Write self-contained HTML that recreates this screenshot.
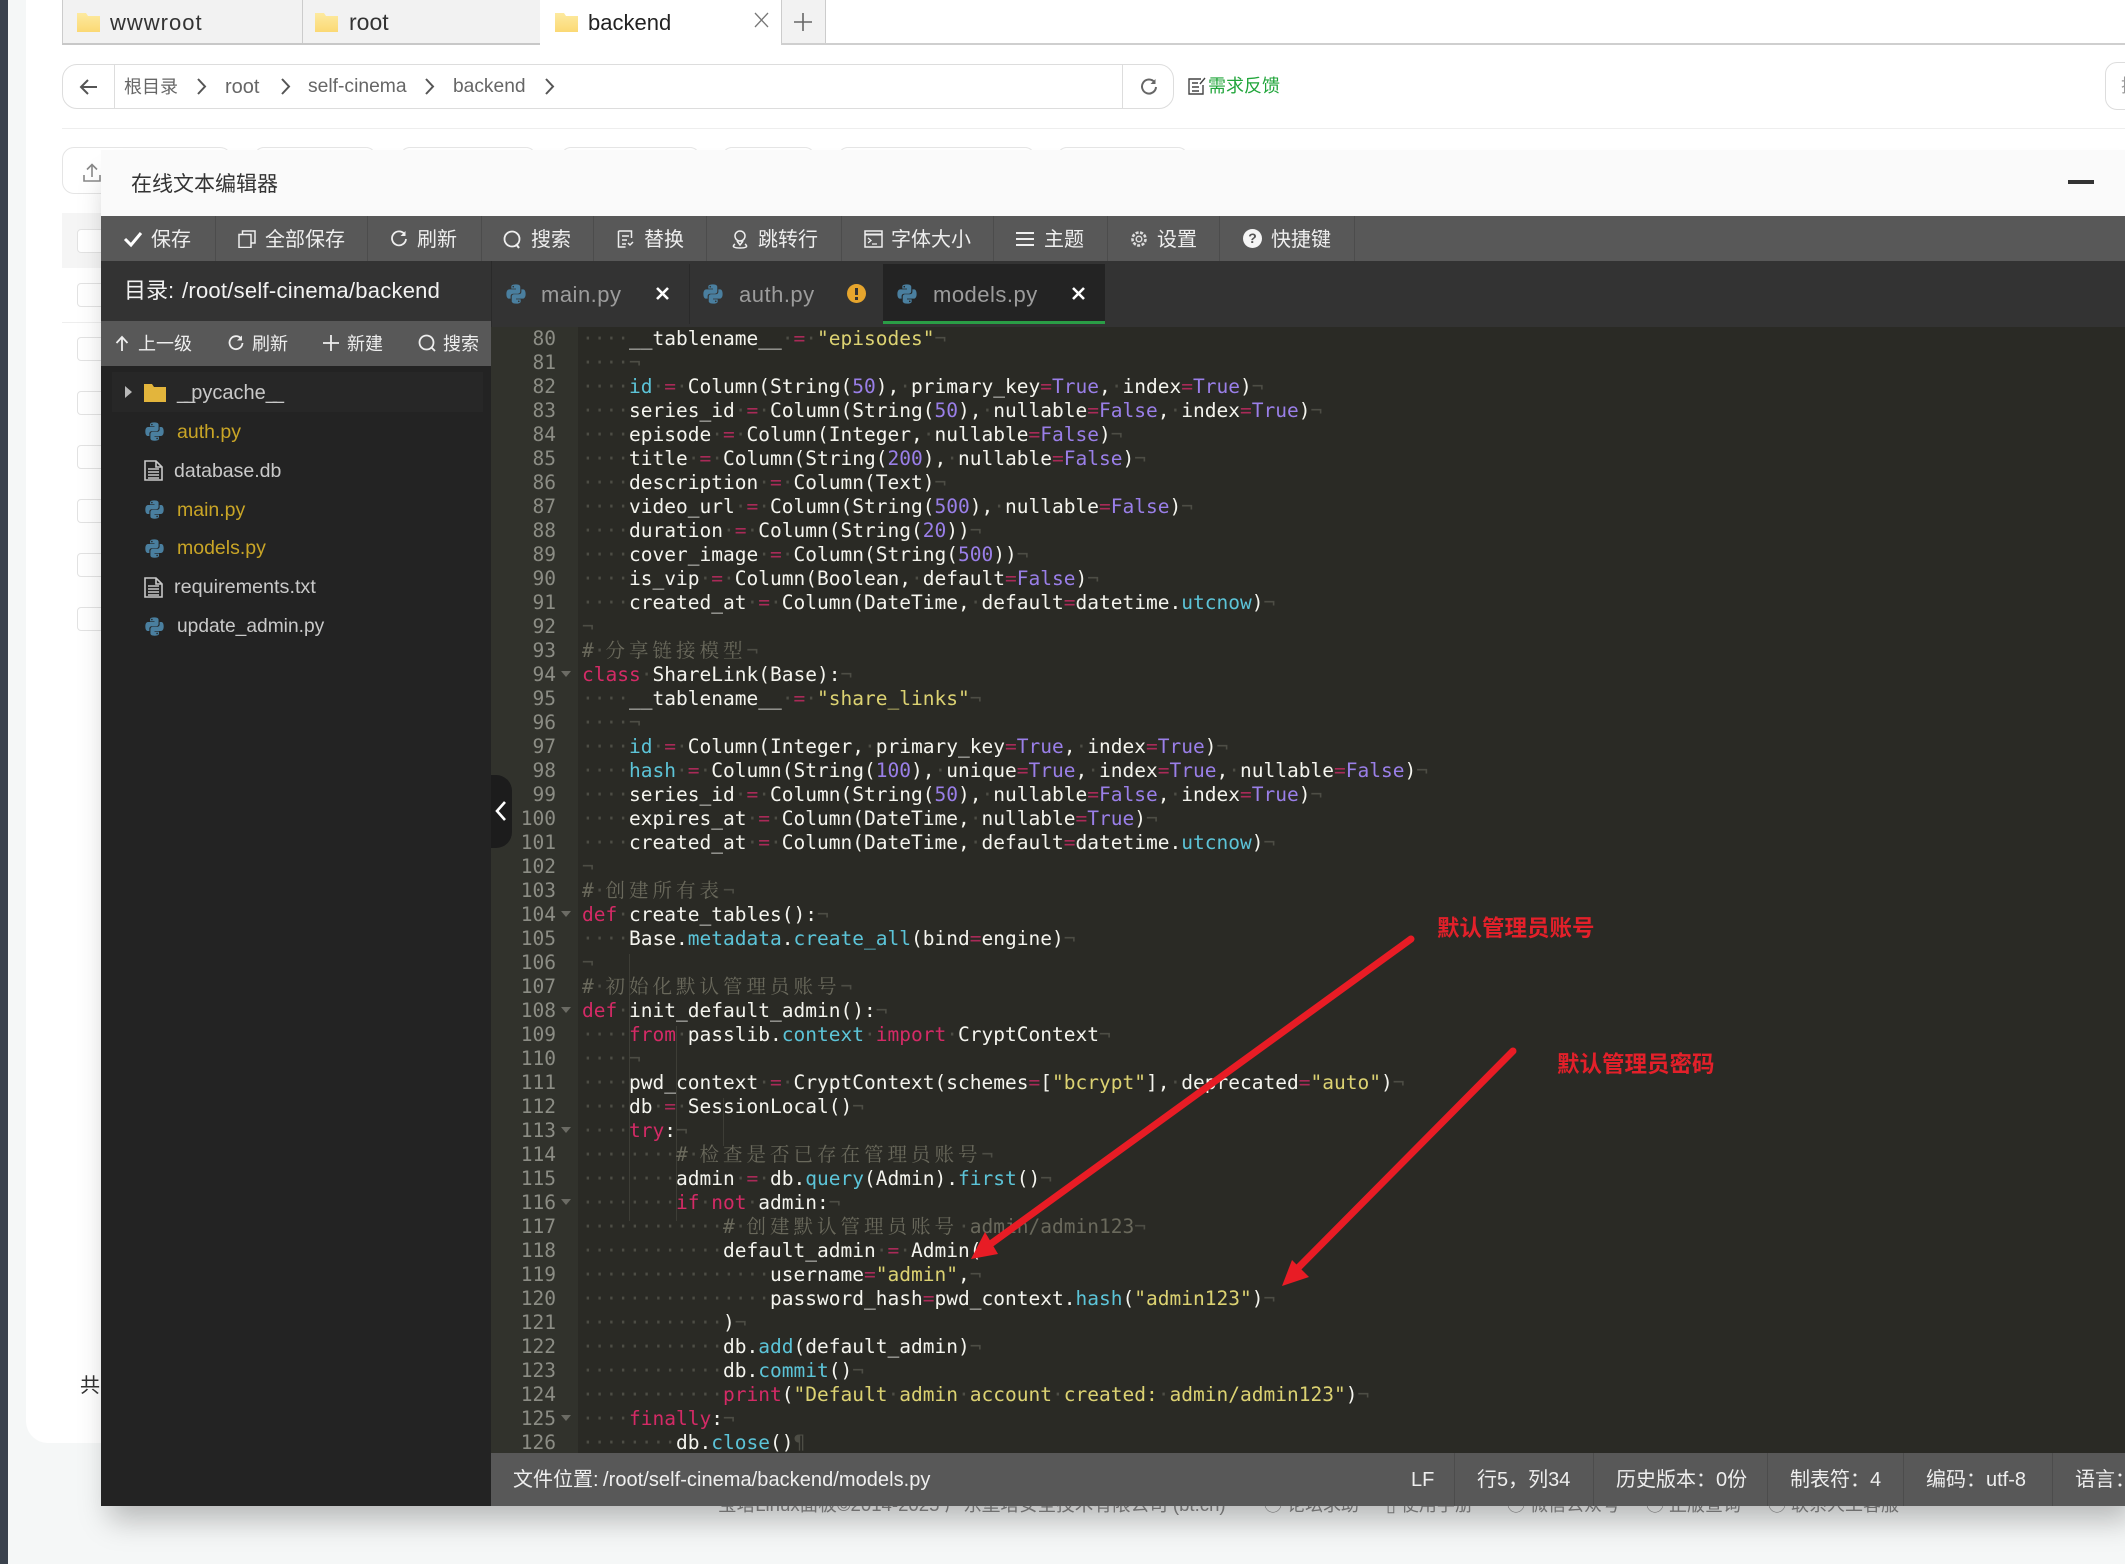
<!DOCTYPE html>
<html lang="zh-CN"><head><meta charset="utf-8"><title>在线文本编辑器</title>
<style>
html,body{margin:0;padding:0;width:2125px;height:1564px;overflow:hidden;background:#f5f7f7}
body{position:relative;font-family:"Liberation Sans","Noto Sans CJK SC",sans-serif;color:#333}
div,span,svg{position:absolute}
.t{position:absolute;line-height:40px;height:40px;white-space:nowrap}
.r{position:absolute;white-space:nowrap;line-height:40px;height:40px;font-size:20px;color:#eee}
pre span{position:static}
pre{margin:0;position:absolute;font-family:"DejaVu Sans Mono","Noto Serif CJK SC",monospace;font-size:19.53px;line-height:24px;white-space:pre}
#code{color:#f4f4ee}
#nums{width:65px;text-align:right;color:#8c8d85}
#code i{font-style:normal;color:#4d4d45}
#code b{font-weight:normal;color:#d42a66}
#code u{text-decoration:none;color:#5cc4d8}
#code s{text-decoration:none;color:#9a7fe8}
#code em{font-style:normal;color:#dcd272}
#code var{font-style:normal;color:#a92a58}
#code cite{font-style:normal;color:#6a695c}
#code dfn{font-style:normal;letter-spacing:3.98px}
.b{background:#fff;border:1px solid #e3e3e3;box-sizing:border-box}
.dv{width:1px;background:#4c4c4c}
.g{width:1px;background:#3d3d36}
.fd{width:0;height:0;border-left:5px solid transparent;border-right:5px solid transparent;border-top:6px solid #6b6b64}
.us{position:static;letter-spacing:-4px}
</style></head><body>
<svg width="0" height="0" style="left:0;top:0">
<defs>
<symbol id="py" viewBox="0 0 16 16"><path fill="#4a7f9f" d="M7.9 1C4.4 1 4.6 2.5 4.6 2.5v1.6H8v.5H3.2S1 4.4 1 8s1.9 3.4 1.9 3.4h1.2V9.7s-.1-1.9 1.9-1.9h3.3s1.8 0 1.8-1.8V2.9S11.4 1 7.9 1zM6 2.1a.6.6 0 110 1.2.6.6 0 010-1.2z"/><path fill="#4a7f9f" d="M8.1 15c3.5 0 3.3-1.5 3.3-1.5v-1.6H8v-.5h4.8S15 11.6 15 8s-1.9-3.4-1.9-3.4h-1.2v1.7s.1 1.9-1.9 1.9H6.7s-1.8 0-1.8 1.8v3.1S4.6 15 8.1 15zm1.9-1.1a.6.6 0 110-1.2.6.6 0 010 1.2z"/></symbol>
<symbol id="doc" viewBox="0 0 19 21"><path fill="none" stroke="#c8c8c8" stroke-width="1.6" d="M1 1h11l6 6v13H1zM12 1v6h6M4 9h11M4 12h11M4 15h11M4 18h11"/></symbol>
<symbol id="fo" viewBox="0 0 23 20"><linearGradient id="lg" x1="0" x2="0" y1="0" y2="1"><stop offset="0" stop-color="#fdeaa0"/><stop offset="1" stop-color="#fbd974"/></linearGradient><path fill="url(#lg)" d="M0 1h9l2 3h12v16H0z"/></symbol>
</defs></svg>

<!-- page chrome -->
<div style="left:0;top:0;width:8px;height:1564px;background:#3a424d"></div>
<div style="left:26px;top:0;width:2099px;height:1443px;background:#fff;border-bottom-left-radius:22px"></div>

<!-- tabs -->
<div style="left:62px;top:0;width:240px;height:43px;background:#f2f2f2;border-left:1px solid #ccc;box-sizing:border-box"></div>
<div style="left:302px;top:0;width:238px;height:43px;background:#f2f2f2;border-left:1px solid #ccc;box-sizing:border-box"></div>
<div style="left:781px;top:0;width:45px;height:43px;background:#f2f2f2;border-left:1px solid #ccc;border-right:1px solid #ccc;box-sizing:border-box"></div>
<div style="left:62px;top:43px;width:478px;height:1.5px;background:#c8c8c8"></div>
<div style="left:781px;top:43px;width:1344px;height:1.5px;background:#cfcfcf"></div>
<svg style="left:77px;top:12px" width="23" height="20"><use href="#fo"/></svg>
<svg style="left:315px;top:12px" width="23" height="20"><use href="#fo"/></svg>
<svg style="left:555px;top:12px" width="23" height="20"><use href="#fo"/></svg>
<span class="t" style="left:110px;top:3px;font-size:22px;letter-spacing:1px;color:#333">wwwroot</span>
<span class="t" style="left:349px;top:2px;font-size:23px;color:#333">root</span>
<span class="t" style="left:588px;top:3px;font-size:22px;color:#222">backend</span>
<svg style="left:754px;top:12px" width="15" height="16"><path d="M1 1l13 14M14 1L1 15" stroke="#777" stroke-width="1.3" fill="none"/></svg>
<svg style="left:793px;top:12px" width="20" height="20"><path d="M10 1v18M1 10h18" stroke="#666" stroke-width="1.6" fill="none"/></svg>

<!-- breadcrumb -->
<div style="left:62px;top:64px;width:1112px;height:45px;border:1.5px solid #ddd;border-radius:15px;box-sizing:border-box;background:#fff"></div>
<div style="left:114px;top:65px;width:1px;height:43px;background:#ddd"></div>
<div style="left:1122px;top:65px;width:1px;height:43px;background:#ddd"></div>
<svg style="left:79px;top:78px" width="20" height="18"><path d="M18 9H3M9 2L2 9l7 7" stroke="#555" stroke-width="2" fill="none"/></svg>
<span class="t" style="left:124px;top:67px;font-size:18px;color:#666">根目录</span>
<span class="t" style="left:225px;top:67px;font-size:20px;color:#666">root</span>
<span class="t" style="left:308px;top:67px;font-size:19.3px;color:#666">self-cinema</span>
<span class="t" style="left:453px;top:67px;font-size:19.2px;color:#666">backend</span>
<svg style="left:196px;top:77px" width="11" height="19"><path d="M2 2l7 7.500L2 17" stroke="#555" stroke-width="2" fill="none"/></svg>
<svg style="left:280px;top:77px" width="11" height="19"><path d="M2 2l7 7.500L2 17" stroke="#555" stroke-width="2" fill="none"/></svg>
<svg style="left:424px;top:77px" width="11" height="19"><path d="M2 2l7 7.500L2 17" stroke="#555" stroke-width="2" fill="none"/></svg>
<svg style="left:544px;top:77px" width="11" height="19"><path d="M2 2l7 7.500L2 17" stroke="#555" stroke-width="2" fill="none"/></svg>
<svg style="left:1140px;top:78px" width="18" height="18"><path d="M14.500 4.200A7 7 0 1 0 16 9" stroke="#666" stroke-width="2" fill="none"/><path d="M15.500 1v5h-5" fill="#666"/></svg>
<svg style="left:1188px;top:77px" width="19" height="18"><path d="M13 2H1v15h14V8M4 6h6M4 10h7M4 14h7M17 1l-5 6" stroke="#444" stroke-width="1.400" fill="none"/></svg>
<span class="t" style="left:1208px;top:66px;font-size:18px;color:#20a53a">需求反馈</span>
<div style="left:2105px;top:62px;width:40px;height:48px;border:1.500px solid #ddd;border-radius:12px;box-sizing:border-box"></div>
<span class="t" style="left:2121px;top:66px;font-size:18px;color:#999">搜</span>
<div style="left:62px;top:128px;width:2063px;height:1px;background:#eee"></div>

<!-- action buttons peeking -->
<div style="left:62px;top:147px;width:170px;height:47px;border:1.500px solid #e5e5e5;border-radius:12px;box-sizing:border-box"></div>
<div style="left:254px;top:147px;width:122px;height:20px;border:1.500px solid #e5e5e5;border-radius:12px;box-sizing:border-box"></div>
<div style="left:400px;top:147px;width:136px;height:20px;border:1.500px solid #e5e5e5;border-radius:12px;box-sizing:border-box"></div>
<div style="left:561px;top:147px;width:139px;height:20px;border:1.500px solid #e5e5e5;border-radius:12px;box-sizing:border-box"></div>
<div style="left:722px;top:147px;width:93px;height:20px;border:1.500px solid #e5e5e5;border-radius:12px;box-sizing:border-box"></div>
<div style="left:838px;top:147px;width:197px;height:20px;border:1.500px solid #e5e5e5;border-radius:12px;box-sizing:border-box"></div>
<div style="left:1057px;top:147px;width:131px;height:20px;border:1.500px solid #e5e5e5;border-radius:12px;box-sizing:border-box"></div>
<svg style="left:82px;top:163px" width="20" height="20"><path d="M10 14V2M5 6.500L10 1.500l5 5M2 12v6h16v-6" stroke="#888" stroke-width="1.600" fill="none"/></svg>

<!-- table rows peeking -->
<div style="left:62px;top:213px;width:40px;height:55px;background:#f5f5f5"></div>
<div style="left:62px;top:322px;width:40px;height:1px;background:#eee"></div>
<div class="b" style="left:77px;top:229px;width:30px;height:24px;border-radius:4px"></div>
<div class="b" style="left:77px;top:283px;width:30px;height:24px;border-radius:4px"></div>
<div class="b" style="left:77px;top:337px;width:30px;height:24px;border-radius:4px"></div>
<div class="b" style="left:77px;top:391px;width:30px;height:24px;border-radius:4px"></div>
<div class="b" style="left:77px;top:445px;width:30px;height:24px;border-radius:4px"></div>
<div class="b" style="left:77px;top:499px;width:30px;height:24px;border-radius:4px"></div>
<div class="b" style="left:77px;top:553px;width:30px;height:24px;border-radius:4px"></div>
<div class="b" style="left:77px;top:607px;width:30px;height:24px;border-radius:4px"></div>
<span class="t" style="left:80px;top:1366px;font-size:20px;color:#333">共</span>

<!-- footer peeking -->
<span class="t" style="left:718px;top:1485px;font-size:18.6px;color:#888">宝塔Linux面板©2014-2025 广东堡塔安全技术有限公司 (bt.cn)</span>
<span class="t" style="left:1264px;top:1485px;font-size:18px;color:#888">◯ 论坛求助</span>
<span class="t" style="left:1386px;top:1485px;font-size:18px;color:#888">▯ 使用手册</span>
<span class="t" style="left:1507px;top:1485px;font-size:18px;color:#888">◯ 微信公众号</span>
<span class="t" style="left:1646px;top:1485px;font-size:18px;color:#888">◯ 正版查询</span>
<span class="t" style="left:1768px;top:1485px;font-size:18px;color:#888">◯ 联系人工客服</span>

<!-- modal -->
<div style="left:101px;top:150px;width:2040px;height:1356px;background:#fafafa;box-shadow:0 22px 28px -8px rgba(0,0,0,.26)"></div>
<span class="t" style="left:131px;top:165px;font-size:21px;color:#333">在线文本编辑器</span>
<div style="left:2068px;top:180px;width:26px;height:4px;background:#333"></div>

<!-- toolbar -->
<div style="left:101px;top:216px;width:2024px;height:45px;background:#585858"></div>
<div class="dv" style="left:215px;top:216px;height:45px"></div>
<div class="dv" style="left:367px;top:216px;height:45px"></div>
<div class="dv" style="left:481px;top:216px;height:45px"></div>
<div class="dv" style="left:593px;top:216px;height:45px"></div>
<div class="dv" style="left:706px;top:216px;height:45px"></div>
<div class="dv" style="left:841px;top:216px;height:45px"></div>
<div class="dv" style="left:993px;top:216px;height:45px"></div>
<div class="dv" style="left:1107px;top:216px;height:45px"></div>
<div class="dv" style="left:1219px;top:216px;height:45px"></div>
<div class="dv" style="left:1354px;top:216px;height:45px"></div>
<svg style="left:123px;top:230px" width="20" height="18"><path d="M2 9l6 6L18 3" stroke="#fff" stroke-width="3" fill="none"/></svg>
<span class="r" style="left:151px;top:220px">保存</span>
<svg style="left:238px;top:230px" width="18" height="18"><path d="M1 4.500h12v13H1zM4.500 4.500V1H17v12h-4" stroke="#eee" stroke-width="1.500" fill="none"/></svg>
<span class="r" style="left:265px;top:220px">全部保存</span>
<svg style="left:390px;top:230px" width="18" height="18"><path d="M14.500 4A7 7 0 1 0 16 9" stroke="#eee" stroke-width="1.800" fill="none"/><path d="M15.500 1v5h-5" fill="#eee"/></svg>
<span class="r" style="left:417px;top:220px">刷新</span>
<svg style="left:503px;top:230px" width="19" height="19"><circle cx="9" cy="9" r="7.500" stroke="#eee" stroke-width="1.800" fill="none"/><path d="M13 14l3 4" stroke="#eee" stroke-width="2"/></svg>
<span class="r" style="left:531px;top:220px">搜索</span>
<svg style="left:617px;top:230px" width="17" height="18"><path d="M1.500 1h13v7M1.500 1v16h7M5 6h7M5 10h5M5 14h4M11 13l2 2 3-3" stroke="#eee" stroke-width="1.500" fill="none"/></svg>
<span class="r" style="left:644px;top:220px">替换</span>
<svg style="left:731px;top:229px" width="18" height="20"><circle cx="9" cy="7" r="5" stroke="#eee" stroke-width="1.500" fill="none"/><path d="M6 12l3 4 3-4M4 15c-4 3 0 4 5 4s9-1 5-4" stroke="#eee" stroke-width="1.500" fill="none"/></svg>
<span class="r" style="left:758px;top:220px">跳转行</span>
<svg style="left:864px;top:230px" width="19" height="18"><rect x="1" y="1" width="17" height="16" stroke="#eee" stroke-width="1.500" fill="none"/><path d="M1 4.500h17" stroke="#eee" stroke-width="2"/><path d="M4 8l3 2.500L4 13M8 14h5" stroke="#eee" stroke-width="1.300" fill="none"/></svg>
<span class="r" style="left:891px;top:220px">字体大小</span>
<svg style="left:1016px;top:231px" width="18" height="16"><path d="M0 2h18M0 8h18M0 14h18" stroke="#eee" stroke-width="2"/></svg>
<span class="r" style="left:1044px;top:220px">主题</span>
<svg style="left:1130px;top:230px" width="18" height="18" viewBox="0 0 18 18"><circle cx="9" cy="9" r="6.500" stroke="#ddd" stroke-width="2.600" fill="none" stroke-dasharray="3 1.500"/><circle cx="9" cy="9" r="2.800" stroke="#ddd" stroke-width="1.500" fill="none"/></svg>
<span class="r" style="left:1157px;top:220px">设置</span>
<div style="left:1243px;top:229px;width:19px;height:19px;border-radius:50%;background:#f5f5f5;color:#555;font-size:14px;font-weight:bold;line-height:19px;text-align:center">?</div>
<span class="r" style="left:1271px;top:220px">快捷键</span>

<!-- tab row -->
<div style="left:101px;top:261px;width:2024px;height:66px;background:#333"></div>
<div style="left:491px;top:261px;width:1px;height:66px;background:#2a2a2a"></div>
<div style="left:689px;top:264px;width:1px;height:60px;background:#2a2a2a"></div>
<div style="left:883px;top:264px;width:222px;height:60px;background:#232323"></div>
<div style="left:883px;top:321px;width:222px;height:3px;background:#2a9d46"></div>
<span class="t" style="left:124px;top:271px;font-size:22px;color:#f2f2f2">目录:</span>
<span class="t" style="left:182px;top:271px;font-size:22px;letter-spacing:.25px;color:#f2f2f2">/root/self-cinema/backend</span>
<svg style="left:505px;top:283px" width="22" height="22"><use href="#py"/></svg>
<span class="t" style="left:541px;top:275px;font-size:22px;color:#9c9c9c;letter-spacing:.5px">main.py</span>
<svg style="left:655px;top:286px" width="15" height="15"><path d="M2 2l11 11M13 2L2 13" stroke="#fff" stroke-width="2.600"/></svg>
<svg style="left:702px;top:283px" width="22" height="22"><use href="#py"/></svg>
<span class="t" style="left:739px;top:275px;font-size:22px;color:#9c9c9c;letter-spacing:.5px">auth.py</span>
<div style="left:847px;top:284px;width:19px;height:19px;border-radius:50%;background:#e6a52d"></div>
<div style="left:855px;top:288px;width:3px;height:7px;background:#333"></div>
<div style="left:855px;top:297px;width:3px;height:3px;background:#333"></div>
<svg style="left:896px;top:283px" width="22" height="22"><use href="#py"/></svg>
<span class="t" style="left:933px;top:275px;font-size:22px;color:#9c9c9c;letter-spacing:.5px">models.py</span>
<svg style="left:1071px;top:286px" width="15" height="15"><path d="M2 2l11 11M13 2L2 13" stroke="#fff" stroke-width="2.600"/></svg>

<!-- sidebar -->
<div style="left:101px;top:321px;width:390px;height:45px;background:#585858"></div>
<div style="left:101px;top:366px;width:390px;height:1140px;background:#232323"></div>
<svg style="left:115px;top:335px" width="14" height="17"><path d="M7 16V2M1.500 8L7 2l5.500 6" stroke="#eee" stroke-width="1.800" fill="none"/></svg>
<span class="t" style="left:138px;top:324px;font-size:18px;color:#eee">上一级</span>
<svg style="left:228px;top:335px" width="16" height="16"><path d="M13 3.500A6.500 6.500 0 1 0 14.500 8" stroke="#eee" stroke-width="1.800" fill="none"/><path d="M14 .5v5H9" fill="#eee"/></svg>
<span class="t" style="left:252px;top:324px;font-size:18px;color:#eee">刷新</span>
<svg style="left:323px;top:335px" width="16" height="16"><path d="M8 0v16M0 8h16" stroke="#eee" stroke-width="1.800"/></svg>
<span class="t" style="left:347px;top:324px;font-size:18px;color:#eee">新建</span>
<svg style="left:418px;top:334px" width="18" height="18"><circle cx="8.500" cy="8.500" r="7" stroke="#eee" stroke-width="1.800" fill="none"/><path d="M13 13l4 4" stroke="#eee" stroke-width="1.800"/></svg>
<span class="t" style="left:443px;top:324px;font-size:18px;color:#eee">搜索</span>

<div style="left:112px;top:372px;width:371px;height:40px;background:#272727"></div>
<div style="left:125px;top:386px;width:0;height:0;border-top:6px solid transparent;border-bottom:6px solid transparent;border-left:7px solid #b9b9b9"></div>
<svg style="left:144px;top:384px" width="22" height="18"><path fill="#e3b53c" d="M0 0h8l2 3h12v15H0z"/></svg>
<svg style="left:144px;top:421px" width="21" height="21"><use href="#py"/></svg>
<svg style="left:144px;top:460px" width="19" height="21"><use href="#doc"/></svg>
<svg style="left:144px;top:499px" width="21" height="21"><use href="#py"/></svg>
<svg style="left:144px;top:538px" width="21" height="21"><use href="#py"/></svg>
<svg style="left:144px;top:577px" width="19" height="21"><use href="#doc"/></svg>
<svg style="left:144px;top:616px" width="21" height="21"><use href="#py"/></svg>
<span class="t" style="left:177px;top:373px;font-size:20px;color:#c9c9c9"><span class="us">__</span>pycache<span class="us">__</span></span>
<span class="t" style="left:177px;top:412px;font-size:19.5px;color:#c9a526">auth.py</span>
<span class="t" style="left:174px;top:451px;font-size:19.5px;color:#c9c9c9">database.db</span>
<span class="t" style="left:177px;top:490px;font-size:19.5px;color:#c9a526">main.py</span>
<span class="t" style="left:177px;top:528px;font-size:19.5px;color:#c9a526">models.py</span>
<span class="t" style="left:174px;top:567px;font-size:19.8px;color:#c9c9c9">requirements.txt</span>
<span class="t" style="left:177px;top:607px;font-size:19.2px;color:#c9c9c9">update_admin.py</span>

<!-- editor -->
<div style="left:491px;top:327px;width:1634px;height:1126px;background:#2a2a25"></div>
<div style="left:491px;top:327px;width:87px;height:1126px;background:#31322c"></div>
<div style="left:491px;top:327px;width:1634px;height:1126px;overflow:hidden">
<div class="g" style="left:138px;top:627px;height:267px"></div>
<div class="g" style="left:185px;top:699px;height:195px"></div>
<div class="g" style="left:232px;top:771px;height:48px"></div>
<div class="fd" style="left:70px;top:344px"></div>
<div class="fd" style="left:70px;top:584px"></div>
<div class="fd" style="left:70px;top:680px"></div>
<div class="fd" style="left:70px;top:800px"></div>
<div class="fd" style="left:70px;top:872px"></div>
<div class="fd" style="left:70px;top:1088px"></div>
</div>
<div style="left:491px;top:327px;width:1634px;height:1126px;overflow:hidden"><pre id="nums" style="left:0;top:0">80
81
82
83
84
85
86
87
88
89
90
91
92
93
94
95
96
97
98
99
100
101
102
103
104
105
106
107
108
109
110
111
112
113
114
115
116
117
118
119
120
121
122
123
124
125
126</pre><pre id="code" style="left:91px;top:0"><i>····</i>__tablename__<i>·</i><var>=</var><i>·</i><em>"episodes"</em><i>¬</i>
<i>····¬</i>
<i>····</i><u>id</u><i>·</i><var>=</var><i>·</i>Column(String(<s>50</s>),<i>·</i>primary_key<var>=</var><s>True</s>,<i>·</i>index<var>=</var><s>True</s>)<i>¬</i>
<i>····</i>series_id<i>·</i><var>=</var><i>·</i>Column(String(<s>50</s>),<i>·</i>nullable<var>=</var><s>False</s>,<i>·</i>index<var>=</var><s>True</s>)<i>¬</i>
<i>····</i>episode<i>·</i><var>=</var><i>·</i>Column(Integer,<i>·</i>nullable<var>=</var><s>False</s>)<i>¬</i>
<i>····</i>title<i>·</i><var>=</var><i>·</i>Column(String(<s>200</s>),<i>·</i>nullable<var>=</var><s>False</s>)<i>¬</i>
<i>····</i>description<i>·</i><var>=</var><i>·</i>Column(Text)<i>¬</i>
<i>····</i>video_url<i>·</i><var>=</var><i>·</i>Column(String(<s>500</s>),<i>·</i>nullable<var>=</var><s>False</s>)<i>¬</i>
<i>····</i>duration<i>·</i><var>=</var><i>·</i>Column(String(<s>20</s>))<i>¬</i>
<i>····</i>cover_image<i>·</i><var>=</var><i>·</i>Column(String(<s>500</s>))<i>¬</i>
<i>····</i>is_vip<i>·</i><var>=</var><i>·</i>Column(Boolean,<i>·</i>default<var>=</var><s>False</s>)<i>¬</i>
<i>····</i>created_at<i>·</i><var>=</var><i>·</i>Column(DateTime,<i>·</i>default<var>=</var>datetime.<u>utcnow</u>)<i>¬</i>
<i>¬</i>
<cite>#<i>·</i><dfn>分享链接模型</dfn></cite><i>¬</i>
<b>class</b><i>·</i>ShareLink(Base):<i>¬</i>
<i>····</i>__tablename__<i>·</i><var>=</var><i>·</i><em>"share_links"</em><i>¬</i>
<i>····¬</i>
<i>····</i><u>id</u><i>·</i><var>=</var><i>·</i>Column(Integer,<i>·</i>primary_key<var>=</var><s>True</s>,<i>·</i>index<var>=</var><s>True</s>)<i>¬</i>
<i>····</i><u>hash</u><i>·</i><var>=</var><i>·</i>Column(String(<s>100</s>),<i>·</i>unique<var>=</var><s>True</s>,<i>·</i>index<var>=</var><s>True</s>,<i>·</i>nullable<var>=</var><s>False</s>)<i>¬</i>
<i>····</i>series_id<i>·</i><var>=</var><i>·</i>Column(String(<s>50</s>),<i>·</i>nullable<var>=</var><s>False</s>,<i>·</i>index<var>=</var><s>True</s>)<i>¬</i>
<i>····</i>expires_at<i>·</i><var>=</var><i>·</i>Column(DateTime,<i>·</i>nullable<var>=</var><s>True</s>)<i>¬</i>
<i>····</i>created_at<i>·</i><var>=</var><i>·</i>Column(DateTime,<i>·</i>default<var>=</var>datetime.<u>utcnow</u>)<i>¬</i>
<i>¬</i>
<cite>#<i>·</i><dfn>创建所有表</dfn></cite><i>¬</i>
<b>def</b><i>·</i>create_tables():<i>¬</i>
<i>····</i>Base.<u>metadata</u>.<u>create_all</u>(bind<var>=</var>engine)<i>¬</i>
<i>¬</i>
<cite>#<i>·</i><dfn>初始化默认管理员账号</dfn></cite><i>¬</i>
<b>def</b><i>·</i>init_default_admin():<i>¬</i>
<i>····</i><b>from</b><i>·</i>passlib.<u>context</u><i>·</i><b>import</b><i>·</i>CryptContext<i>¬</i>
<i>····¬</i>
<i>····</i>pwd_context<i>·</i><var>=</var><i>·</i>CryptContext(schemes<var>=</var>[<em>"bcrypt"</em>],<i>·</i>deprecated<var>=</var><em>"auto"</em>)<i>¬</i>
<i>····</i>db<i>·</i><var>=</var><i>·</i>SessionLocal()<i>¬</i>
<i>····</i><b>try</b>:<i>¬</i>
<i>········</i><cite>#<i>·</i><dfn>检查是否已存在管理员账号</dfn></cite><i>¬</i>
<i>········</i>admin<i>·</i><var>=</var><i>·</i>db.<u>query</u>(Admin).<u>first</u>()<i>¬</i>
<i>········</i><b>if</b><i>·</i><b>not</b><i>·</i>admin:<i>¬</i>
<i>············</i><cite>#<i>·</i><dfn>创建默认管理员账号</dfn><i>·</i>admin/admin123</cite><i>¬</i>
<i>············</i>default_admin<i>·</i><var>=</var><i>·</i>Admin(<i>¬</i>
<i>················</i>username<var>=</var><em>"admin"</em>,<i>¬</i>
<i>················</i>password_hash<var>=</var>pwd_context.<u>hash</u>(<em>"admin123"</em>)<i>¬</i>
<i>············</i>)<i>¬</i>
<i>············</i>db.<u>add</u>(default_admin)<i>¬</i>
<i>············</i>db.<u>commit</u>()<i>¬</i>
<i>············</i><b>print</b>(<em>"Default<i>·</i>admin<i>·</i>account<i>·</i>created:<i>·</i>admin/admin123"</em>)<i>¬</i>
<i>····</i><b>finally</b>:<i>¬</i>
<i>········</i>db.<u>close</u>()<i>¶</i></pre></div>

<!-- collapse handle -->
<div style="left:491px;top:775px;width:21px;height:73px;background:#1c1c1c;border-radius:0 16px 16px 0"></div>
<svg style="left:494px;top:800px" width="13" height="22"><path d="M11 2L3 11l8 9" stroke="#fff" stroke-width="2.600" fill="none"/></svg>

<!-- status bar -->
<div style="left:491px;top:1453px;width:1634px;height:53px;background:#585858"></div>
<span class="r" style="left:513px;top:1460px">文件位置:</span>
<span class="r" style="left:603px;top:1460px;letter-spacing:.05px">/root/self-cinema/backend/models.py</span>
<div class="dv" style="left:1454px;top:1453px;height:53px"></div>
<div class="dv" style="left:1593px;top:1453px;height:53px"></div>
<div class="dv" style="left:1767px;top:1453px;height:53px"></div>
<div class="dv" style="left:1903px;top:1453px;height:53px"></div>
<div class="dv" style="left:2052px;top:1453px;height:53px"></div>
<span class="r" style="left:1411px;top:1460px">LF</span>
<span class="r" style="left:1477px;top:1460px">行5，列34</span>
<span class="r" style="left:1616px;top:1460px">历史版本：0份</span>
<span class="r" style="left:1790px;top:1460px">制表符：4</span>
<span class="r" style="left:1926px;top:1460px">编码：utf-8</span>
<span class="r" style="left:2075px;top:1460px">语言：</span>

<!-- annotations -->
<svg style="left:0;top:0" width="2125" height="1564">
<g stroke="#e81c25" stroke-width="7" stroke-linecap="round" fill="none">
<path d="M1411 939L985 1248"/>
<path d="M1513 1051L1295 1271"/>
</g>
<path fill="#e81c25" d="M971 1259L998 1254L985 1232z"/>
<path fill="#e81c25" d="M1282 1286L1309 1277L1292 1260z"/>
</svg>
<span class="t" style="left:1437px;top:909px;font-size:22.5px;font-weight:bold;color:#e3202a">默认管理员账号</span>
<span class="t" style="left:1557px;top:1045px;font-size:22.5px;font-weight:bold;color:#e3202a">默认管理员密码</span>
</body></html>
